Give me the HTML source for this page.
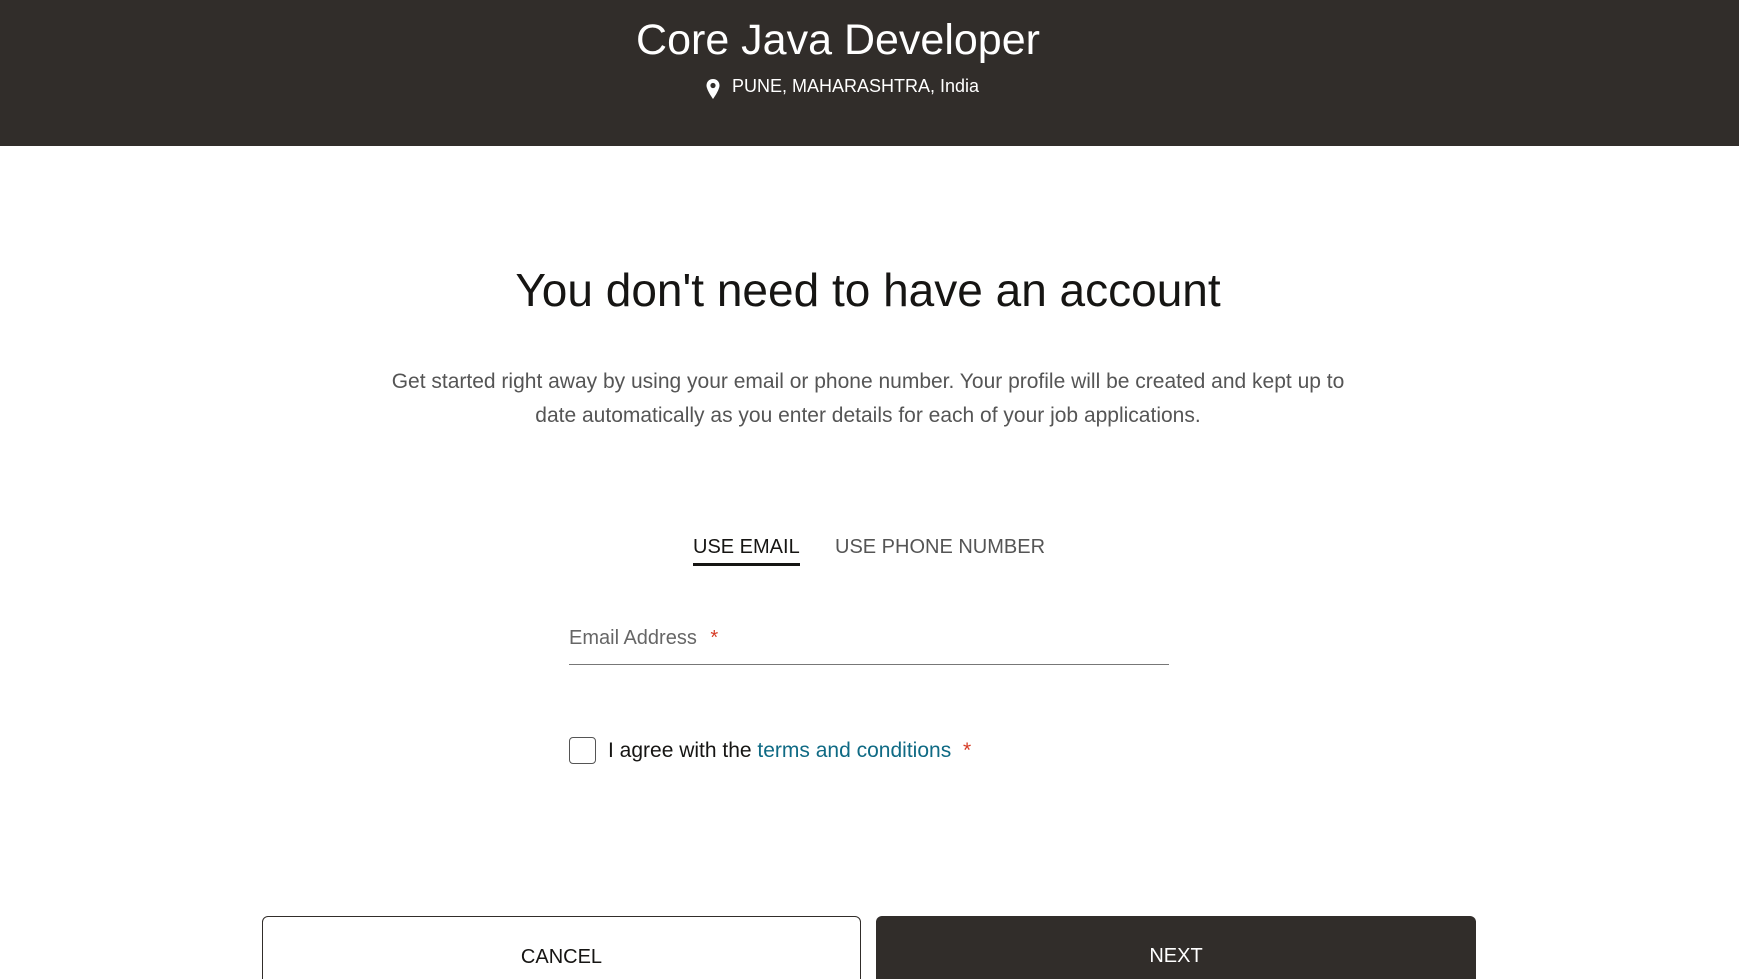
<!DOCTYPE html>
<html style="overflow:hidden;height:979px"><head><style>
*{margin:0;padding:0;box-sizing:border-box}
body{width:1739px;height:979px;overflow:hidden;background:#fff;font-family:"Liberation Sans",sans-serif;position:relative}
.hdr{position:absolute;left:0;top:0;width:1739px;height:146px;background:#312d2a}
.t{position:absolute;white-space:nowrap}
</style></head><body>
<div class="hdr"></div>
<div class="t" style="left:0;width:1676px;text-align:center;top:16px;font-size:43px;color:#fff">Core Java Developer</div>
<svg class="t" style="left:705px;top:78px" width="16" height="22" viewBox="0 0 16 22"><path d="M8 1C4 1 1.5 4 1.5 7.5 1.5 12 8 21 8 21S14.5 12 14.5 7.5C14.5 4 12 1 8 1Z" fill="#fff"/><circle cx="8" cy="7.5" r="2.6" fill="#312d2a"/></svg>
<div class="t" style="left:732px;top:76px;font-size:18px;color:#fff">PUNE, MAHARASHTRA, India</div>
<div class="t" style="left:0;width:1736px;text-align:center;top:263px;font-size:46px;color:#161513">You don't need to have an account</div>
<div class="t" style="left:0;width:1736px;text-align:center;top:365px;font-size:21px;line-height:34px;color:#555;white-space:normal">Get started right away by using your email or phone number. Your profile will be created and kept up to<br>date automatically as you enter details for each of your job applications.</div>
<div class="t" style="left:693px;top:536px;font-size:20px;color:#161513">USE EMAIL</div>
<div class="t" style="left:693px;top:563px;width:107px;height:3px;background:#161513"></div>
<div class="t" style="left:835px;top:536px;font-size:20px;color:#555">USE PHONE NUMBER</div>
<div class="t" style="left:569px;top:627px;font-size:20px;color:#666">Email Address <span style="color:#d63b25;margin-left:8px">*</span></div>
<div class="t" style="left:569px;top:664px;width:600px;height:1px;background:#777"></div>
<div class="t" style="left:569px;top:737px;width:27px;height:27px;border:1px solid #555;border-radius:4px"></div>
<div class="t" style="left:608px;top:739px;font-size:21px;color:#161513">I agree with the <span style="color:#0f6a84">terms and conditions</span> <span style="color:#d63b25;margin-left:6px">*</span></div>
<div class="t" style="left:262px;top:916px;width:599px;height:100px;border:1px solid #312d2a;border-radius:6px;text-align:center;padding-top:29px;font-size:20px;color:#161513">CANCEL</div>
<div class="t" style="left:876px;top:916px;width:600px;height:100px;background:#312d2a;border-radius:6px;text-align:center;padding-top:29px;font-size:20px;color:#fff">NEXT</div>
</body></html>
